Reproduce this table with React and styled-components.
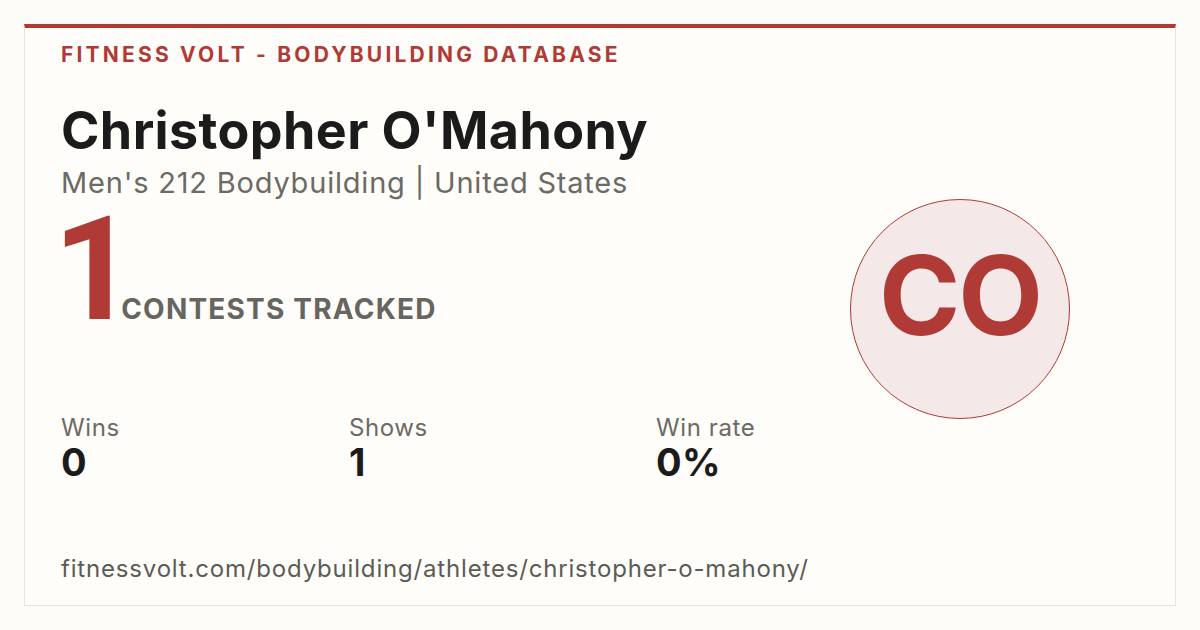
import React from 'react';
import styled, { createGlobalStyle } from 'styled-components';

const GlobalStyle = createGlobalStyle`
  html, body {
    margin: 0;
    padding: 0;
    background: #fdfcf8;
  }
  body {
    font-family: 'Inter', 'Noto Sans', sans-serif;
  }
`;

const Page = styled.div`
  width: 1200px;
  height: 630px;
  padding: 24px;
  box-sizing: border-box;
`;

const Card = styled.div`
  height: 100%;
  box-sizing: border-box;
  background: #fefdf9;
  border: 1px solid #e6e4de;
  border-top: 4px solid #b03a35;
  display: flex;
  padding: 0 36px;
`;

const Main = styled.div`
  flex: 1;
  min-width: 0;
  display: flex;
  flex-direction: column;
`;

const Brand = styled.div`
  margin-top: 14px;
  font-size: 21px;
  line-height: 26px;
  font-weight: 700;
  letter-spacing: 3.2px;
  color: #b03a35;
  text-transform: uppercase;
`;

const Name = styled.h1`
  margin: 33px 0 0;
  font-size: 52px;
  line-height: 60px;
  font-weight: 700;
  letter-spacing: 0.4px;
  color: #1b1b1b;
`;

const Division = styled.div`
  margin-top: 5px;
  font-size: 29px;
  line-height: 34px;
  font-weight: 400;
  letter-spacing: 0.8px;
  color: #6b6a65;
`;

const Contests = styled.div`
  display: flex;
  align-items: baseline;
  margin-top: 4px;
`;

const BigCount = styled.span`
  font-family: 'Roboto', 'Inter', sans-serif;
  font-size: 145px;
  line-height: 130px;
  font-weight: 700;
  color: #b03a35;
  margin-left: -8px;
  margin-right: -15px;
`;

const CountLabel = styled.span`
  font-size: 28px;
  font-weight: 700;
  letter-spacing: 1.2px;
  color: #66655f;
  text-transform: uppercase;
`;

const Stats = styled.div`
  display: grid;
  grid-template-columns: 288px 307px auto;
  margin-top: 80px;
`;

const Stat = styled.div`
  display: flex;
  flex-direction: column;
`;

const StatLabel = styled.span`
  font-size: 24px;
  line-height: 28px;
  color: #6b6a65;
  letter-spacing: 0.6px;
`;

const StatValue = styled.span`
  font-size: 38px;
  line-height: 40px;
  font-weight: 700;
  letter-spacing: 0.5px;
  color: #1b1b1b;
`;

const Url = styled.div`
  margin-top: auto;
  margin-bottom: 22px;
  font-size: 24px;
  line-height: 28px;
  white-space: nowrap;
  color: #5c5b56;
  letter-spacing: 0.82px;
`;

const Aside = styled.div`
  width: 290px;
  display: flex;
  align-items: center;
  justify-content: center;
  padding-bottom: 16px;
  margin-right: 34px;
`;

const Avatar = styled.div`
  width: 220px;
  height: 220px;
  box-sizing: border-box;
  padding-bottom: 28px;
  border-radius: 50%;
  border: 1.5px solid #b03a35;
  background: #f4e8e8;
  display: flex;
  align-items: center;
  justify-content: center;
  color: #b03a35;
  font-size: 110px;
  font-weight: 700;
  letter-spacing: -2px;
`;

const stats = [
  { label: 'Wins', value: '0' },
  { label: 'Shows', value: '1' },
  { label: 'Win rate', value: '0%' },
];

export default function App() {
  return (
    <>
      <GlobalStyle />
      <Page>
        <Card>
          <Main>
            <Brand>Fitness Volt - Bodybuilding Database</Brand>
            <Name>Christopher O'Mahony</Name>
            <Division>Men's 212 Bodybuilding | United States</Division>
            <Contests>
              <BigCount>1</BigCount>
              <CountLabel>Contests tracked</CountLabel>
            </Contests>
            <Stats>
              {stats.map((s) => (
                <Stat key={s.label}>
                  <StatLabel>{s.label}</StatLabel>
                  <StatValue>{s.value}</StatValue>
                </Stat>
              ))}
            </Stats>
            <Url>fitnessvolt.com/bodybuilding/athletes/christopher-o-mahony/</Url>
          </Main>
          <Aside>
            <Avatar>CO</Avatar>
          </Aside>
        </Card>
      </Page>
    </>
  );
}
